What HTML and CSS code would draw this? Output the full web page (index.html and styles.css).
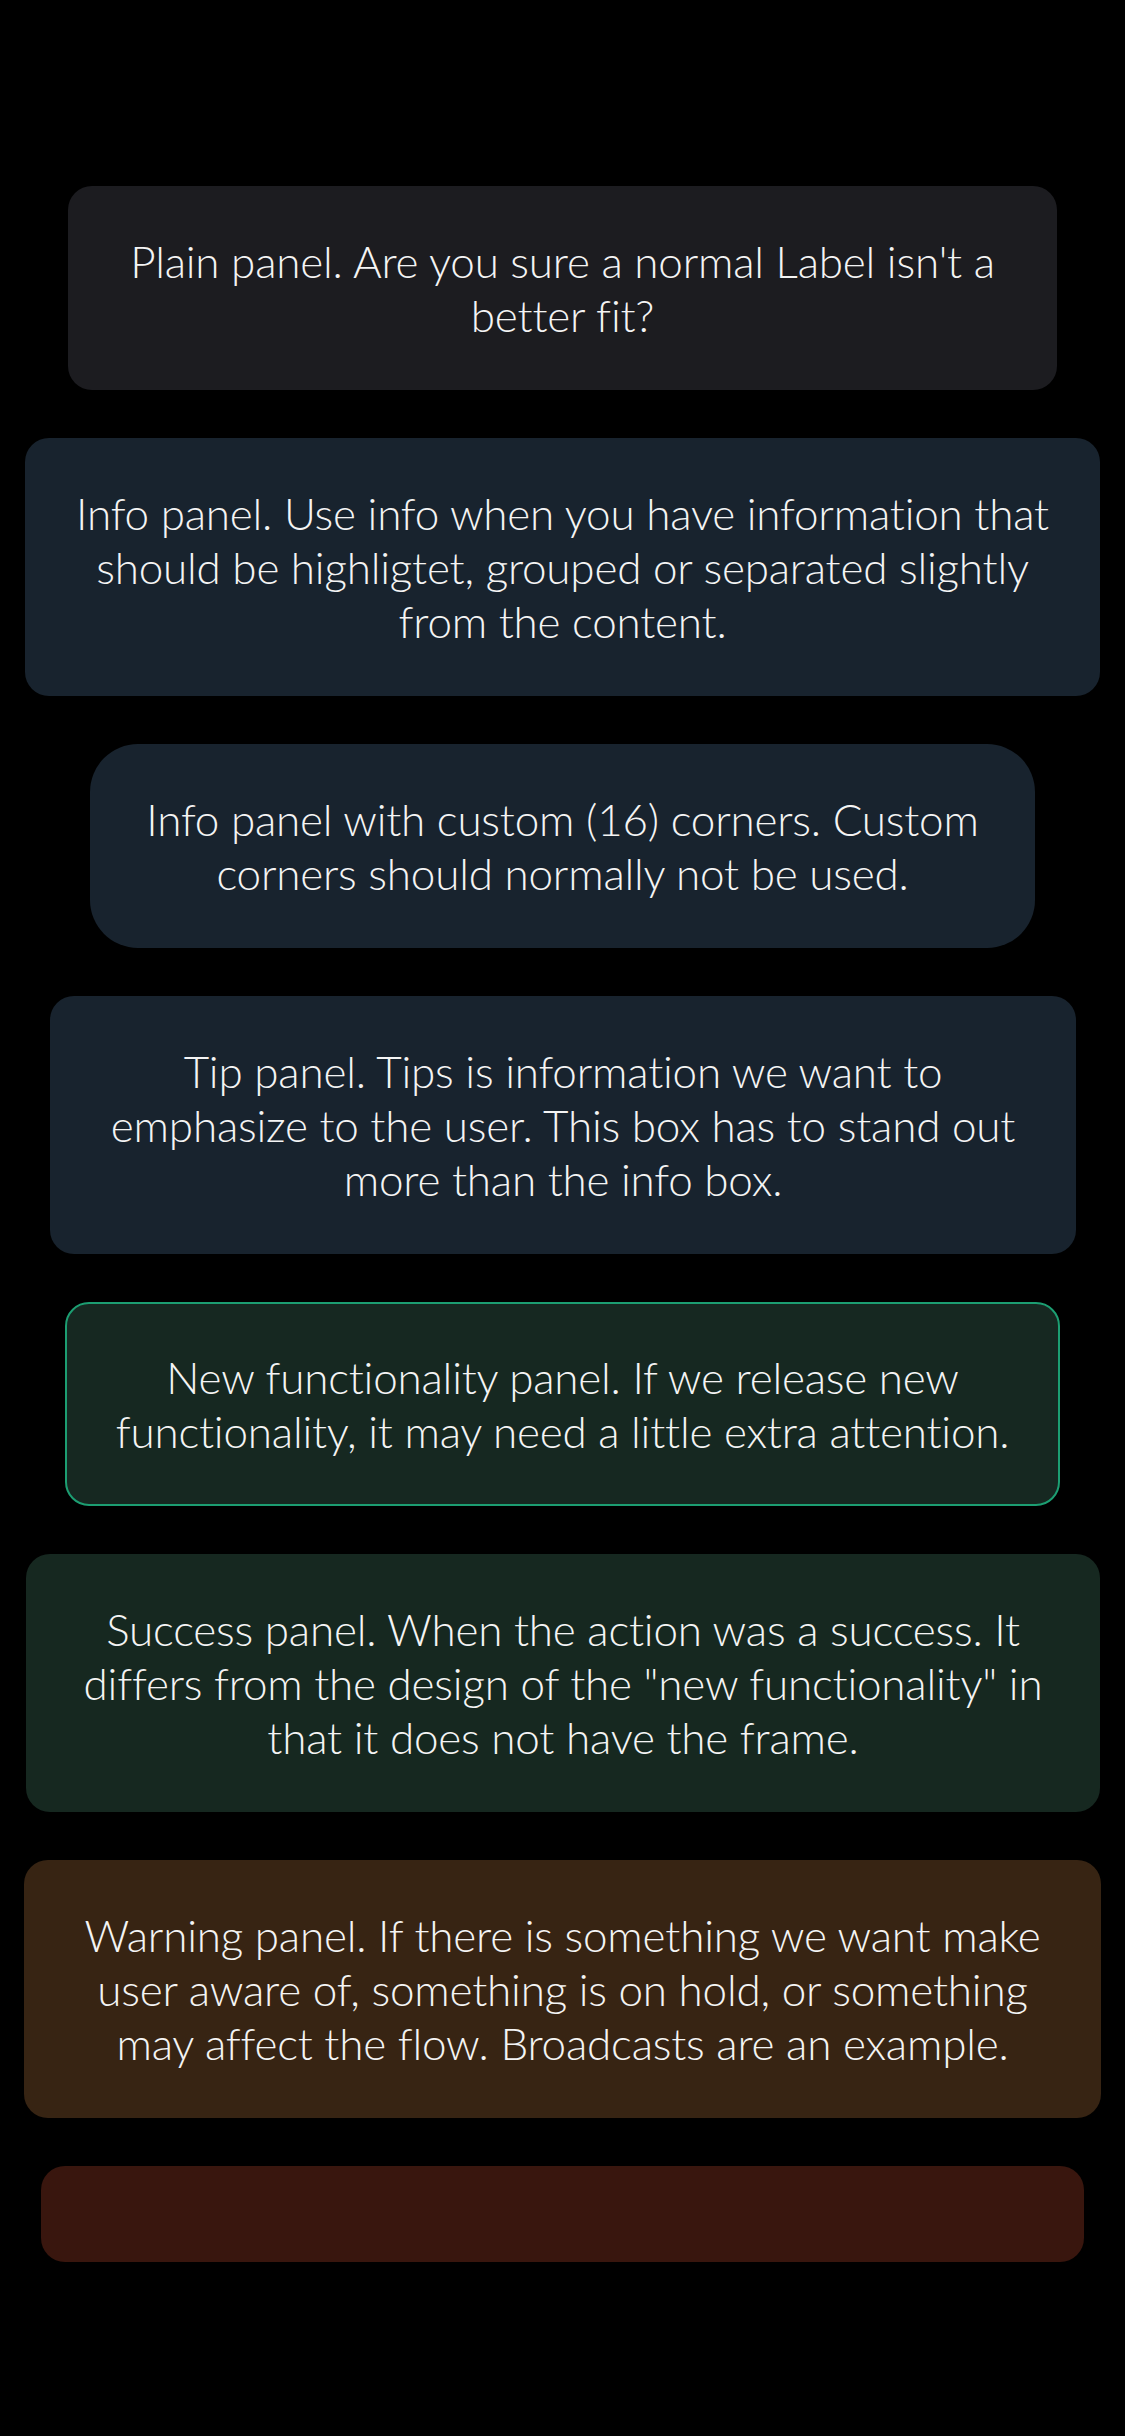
FILE: index.html
```html
<!DOCTYPE html>
<html lang="en">
<head>
<meta charset="utf-8">
<title>Panels</title>
<link rel="stylesheet" href="styles.css">
</head>
<body>
<main class="stack">
  <div class="panel panel--plain">Plain panel. Are you sure a normal Label isn't a better fit?</div>
  <div class="panel panel--info">Info panel. Use info when you have information that should be highligtet, grouped or separated slightly from the content.</div>
  <div class="panel panel--custom">Info panel with custom (16) corners. Custom corners should normally not be used.</div>
  <div class="panel panel--tip">Tip panel. Tips is information we want to emphasize to the user. This box has to stand out more than the info box.</div>
  <div class="panel panel--new">New functionality panel. If we release new functionality, it may need a little extra attention.</div>
  <div class="panel panel--success">Success panel. When the action was a success. It differs from the design of the "new functionality" in that it does not have the frame.</div>
  <div class="panel panel--warning">Warning panel. If there is something we want make user aware of, something is on hold, or something may affect the flow. Broadcasts are an example.</div>
  <div class="panel panel--error"></div>
</main>
</body>
</html>
```
FILE: styles.css
```css
html, body {
  margin: 0;
  padding: 0;
  background: #000;
}

body {
  width: 1125px;
  min-height: 2436px;
  font-family: "Lato", "Liberation Sans", sans-serif;
  font-weight: 300;
  color: #f4f4f4;
}

.stack {
  display: flex;
  flex-direction: column;
  gap: 48px;
  padding-top: 186px;
}

.panel {
  box-sizing: border-box;
  padding: 48px 44px;
  min-height: 96px;
  font-size: 44px;
  letter-spacing: -0.2px;
  font-variant-ligatures: none;
  line-height: 54px;
  text-align: center;
  border-radius: 24px;
}

.panel--plain {
  margin: 0 68px;
  background: #1c1c20;
}

.panel--info {
  margin: 0 25px;
  background: #18232e;
}

.panel--custom {
  margin: 0 90px;
  background: #18232e;
  border-radius: 48px;
}

.panel--tip {
  margin: 0 49px 0 50px;
  background: #18232e;
}

.panel--new {
  margin: 0 65px;
  background: #162821;
  border: 2px solid #1c9e72;
  padding: 46px 40px;
}

.panel--success {
  margin: 0 25px 0 26px;
  background: #162820;
}

.panel--warning {
  margin: 0 24px;
  background: #372413;
}

.panel--error {
  margin: 0 41px;
  background: #39160e;
}
```
